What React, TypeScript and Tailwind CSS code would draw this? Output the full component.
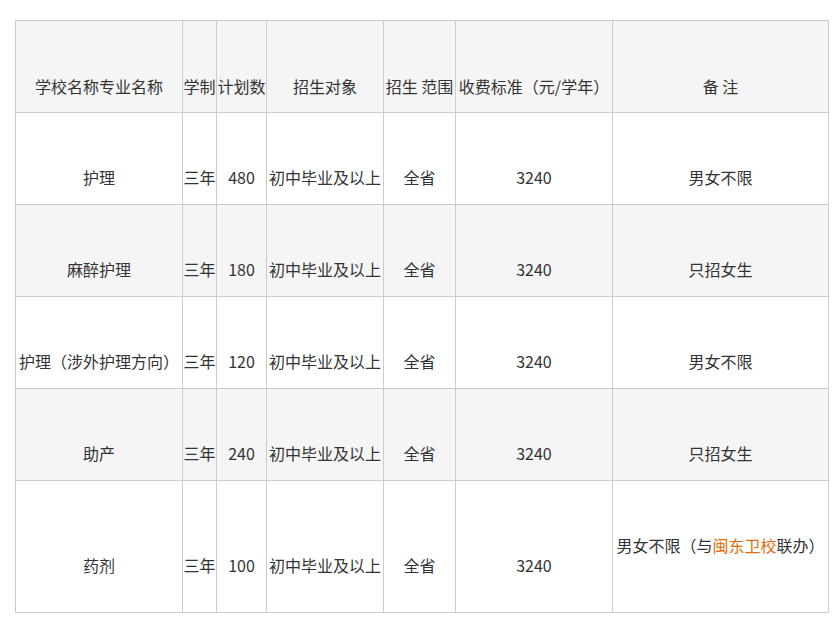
import React from "react";

const rows = [
  { name: "护理", n: "480", note: "男女不限", gray: false },
  { name: "麻醉护理", n: "180", note: "只招女生", gray: true },
  { name: "护理（涉外护理方向）", n: "120", note: "男女不限", gray: false },
  { name: "助产", n: "240", note: "只招女生", gray: true },
];

const cell =
  "border border-[#cccccc] text-center align-bottom whitespace-nowrap px-0 leading-[24px]";

export default function App() {
  return (
    <div
      className="bg-white w-[840px] h-[626px] pt-5 pl-[15px] text-[16px] text-[#333333]"
      style={{ fontFamily: '"Noto Sans CJK SC", "Noto Sans", sans-serif' }}
    >
      <table className="table-fixed border-collapse w-[814px]">
        <colgroup>
          <col className="w-[167px]" />
          <col className="w-[34px]" />
          <col className="w-[50px]" />
          <col className="w-[117px]" />
          <col className="w-[72px]" />
          <col className="w-[157px]" />
          <col className="w-[216px]" />
        </colgroup>
        <thead>
          <tr className="h-[92px] bg-[#f5f5f5]">
            <th className={`${cell} pb-[14px] font-normal`}>学校名称专业名称</th>
            <th className={`${cell} pb-[14px] font-normal`}>学制</th>
            <th className={`${cell} pb-[14px] font-normal`}>计划数</th>
            <th className={`${cell} pb-[14px] font-normal`}>招生对象</th>
            <th className={`${cell} pb-[14px] font-normal`}>招生 范围</th>
            <th className={`${cell} pb-[14px] font-normal`}>收费标准（元/学年）</th>
            <th className={`${cell} pb-[14px] font-normal`}>备 注</th>
          </tr>
        </thead>
        <tbody>
          {rows.map((r) => (
            <tr key={r.name} className={`h-[92px] ${r.gray ? "bg-[#f5f5f5]" : "bg-white"}`}>
              <td className={`${cell} pb-[15px]`}>{r.name}</td>
              <td className={`${cell} pb-[15px]`}>三年</td>
              <td className={`${cell} pb-[15px]`}>{r.n}</td>
              <td className={`${cell} pb-[15px]`}>初中毕业及以上</td>
              <td className={`${cell} pb-[15px]`}>全省</td>
              <td className={`${cell} pb-[15px]`}>3240</td>
              <td className={`${cell} pb-[15px]`}>{r.note}</td>
            </tr>
          ))}
          <tr className="h-[132px] bg-white">
            <td className={`${cell} pb-[35px]`}>药剂</td>
            <td className={`${cell} pb-[35px]`}>三年</td>
            <td className={`${cell} pb-[35px]`}>100</td>
            <td className={`${cell} pb-[35px]`}>初中毕业及以上</td>
            <td className={`${cell} pb-[35px]`}>全省</td>
            <td className={`${cell} pb-[35px]`}>3240</td>
            <td className={`${cell} pb-[55px]`}>
              男女不限（与<span className="text-[#e36c09]">闽东卫校</span>联办）
            </td>
          </tr>
        </tbody>
      </table>
    </div>
  );
}
